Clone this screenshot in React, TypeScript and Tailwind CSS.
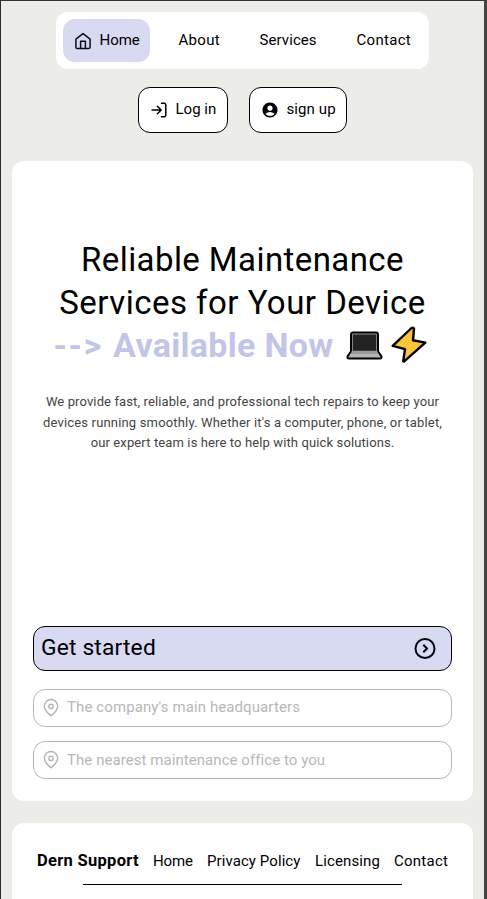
import React from "react";
import { MdAccountCircle } from "react-icons/md";

function HomeIcon() {
  return (
    <svg width="18" height="18" viewBox="0 0 18 18" fill="none" stroke="#0b0d1c" strokeWidth="1.5" strokeLinejoin="round">
      <path d="M1.9 7.2 9 1.6l7.1 5.6v8a1.4 1.4 0 0 1-1.4 1.4H3.3a1.4 1.4 0 0 1-1.4-1.4Z" />
      <path d="M6.6 16.4V9.3h4.8v7.1" />
    </svg>
  );
}

function LoginIcon() {
  return (
    <svg width="18" height="18" viewBox="0 0 18 18" fill="none" stroke="black" strokeWidth="1.5" strokeLinecap="round" strokeLinejoin="round">
      <path d="M2 9h9M7.4 5.2 11.2 9l-3.800 3.800" />
      <path d="M11.500 2.300h2.800a1.500 1.500 0 0 1 1.500 1.500v10.400a1.500 1.500 0 0 1-1.500 1.500h-2.800" />
    </svg>
  );
}

function PinIcon() {
  return (
    <svg className="shrink-0" width="18" height="20" viewBox="0 0 18 20" fill="none" stroke="#b3b3b3" strokeWidth="1.4" strokeLinejoin="round">
      <path d="M9 17.800c-1.500-1.600-6.700-4.800-6.700-9.600a6.700 6.700 0 0 1 13.400 0c0 4.800-5.200 8-6.700 9.600Z" />
      <circle cx="9" cy="8.400" r="2.100" />
    </svg>
  );
}

function ChevronCircle() {
  return (
    <svg width="22" height="22" viewBox="0 0 22 22" fill="none" stroke="#05060f" strokeWidth="2">
      <circle cx="11" cy="10.500" r="9.500" />
      <path d="m9.300 6.800 3.700 3.700-3.700 3.700" />
    </svg>
  );
}

function Laptop() {
  return (
    <svg width="37" height="29" viewBox="0 0 37 29" stroke="black" strokeWidth="2" strokeLinejoin="round">
      <path d="M5 21V3.500Q5 1.500 7 1.500h23q2 0 2 2V21Z" fill="#9b9b9b" />
      <path d="M6.800 3.500h23.400v16.500h-23.400Z" fill="#222" stroke="none" />
      <path d="M4.500 21h28l3 4.500q.5 2-1.500 2H3q-2 0-1.500-2Z" fill="#b5b5b5" />
      <path d="M6 19.800h25l1.500 3.200h-28Z" fill="#9b9b9b" stroke="none" />
    </svg>
  );
}

function Bolt() {
  return (
    <svg width="36" height="38" viewBox="0 0 36 38" fill="#fcc43a" stroke="black" strokeWidth="2.400" strokeLinejoin="round">
      <path d="M20.500 2 1.700 19.800l12.300 3.400-1.800 11.900q.3.800 1.300.1L34.300 16.600l-12.300-2.400L23 2.600Q22 1.200 20.500 2Z" />
    </svg>
  );
}

function Field({ label, spacing }: { label: string; spacing: string }) {
  return (
    <div className="flex h-[38px] items-center rounded-xl border border-[#b7b7b7] pl-[8px] text-[15px] text-[#b7b7b7]">
      <PinIcon />
      <span className={`ml-[7px] whitespace-nowrap ${spacing}`}>{label}</span>
    </div>
  );
}

export default function App() {
  return (
    <div className="h-[899px] overflow-hidden border-t border-r-[3px] border-l border-t-[#343133] border-r-[#444543] border-l-[#2d2a2c] bg-[#ecede8] font-[Roboto,sans-serif] text-black">
      <header className="flex flex-col items-center pt-[11px] pr-[1px]">
        <nav className="flex h-[57px] w-[373px] items-center rounded-xl bg-white pl-[7px] text-[15px] whitespace-nowrap">
          <a className="flex h-[43px] w-[87px] items-center rounded-xl bg-[#d7daf0] pl-[11px]">
            <HomeIcon />
            <span className="ml-[8px] tracking-[-0.05px]">Home</span>
          </a>
          <a className="ml-[29px] w-[81px] tracking-[0.3px]">About</a>
          <a className="w-[97px] tracking-[0.08px]">Services</a>
          <a className="tracking-[0.3px]">Contact</a>
        </nav>
        <div className="mt-[18px] flex gap-[21px] text-[15px] whitespace-nowrap">
          <button className="flex h-[46px] w-[90px] items-center rounded-xl border border-black bg-white pl-[11px]">
            <LoginIcon />
            <span className="ml-[8px] pb-px tracking-[0px]">Log in</span>
          </button>
          <button className="flex h-[46px] w-[98px] items-center rounded-xl border border-black bg-white pl-[11px]">
            <MdAccountCircle size={18} />
            <span className="ml-[8px] pb-px tracking-[0.1px]">sign up</span>
          </button>
        </div>
      </header>

      <main className="mt-[28px] ml-[11px] flex h-[640px] w-[461px] flex-col rounded-xl bg-white px-[21px]">
        <h1 className="mt-[77px] flex flex-col items-center text-[33px] leading-[43px] whitespace-nowrap">
          <span className="tracking-[0.42px]">Reliable Maintenance</span>
          <span className="tracking-[0.47px]">Services for Your Device</span>
          <span className="mr-[4px] flex items-center">
            <b className="text-[34px] font-bold text-[#c1c5e8]">
              <span className="tracking-[1.7px]">--&gt; </span>
              <span className="tracking-[0.3px]">Available Now</span>
            </b>
            <span className="ml-[13px]"><Laptop /></span>
            <span className="ml-[8px] pb-[2px]"><Bolt /></span>
          </span>
        </h1>
        <p className="mt-[25px] text-center text-[13px] leading-[20.5px] whitespace-nowrap text-[#444]">
          <span className="block tracking-[0.12px]">We provide fast, reliable, and professional tech repairs to keep your</span>
          <span className="block tracking-[0.17px]">devices running smoothly. Whether it's a computer, phone, or tablet,</span>
          <span className="block tracking-[0.12px]">our expert team is here to help with quick solutions.</span>
        </p>
        <div className="mt-auto mb-[22px] flex flex-col">
          <button className="flex h-[45px] items-center justify-between rounded-xl border border-black bg-[#d7daf0] pr-[15px] pl-[7px] text-[22.8px]">
            <span className="tracking-[0.17px]">Get started</span>
            <ChevronCircle />
          </button>
          <div className="mt-[18px] flex flex-col gap-[14px]">
            <Field label="The company's main headquarters" spacing="tracking-[0.1px] pb-px" />
            <Field label="The nearest maintenance office to you" spacing="tracking-[0.06px] pt-px" />
          </div>
        </div>
      </main>

      <footer className="mt-[22px] ml-[11px] flex h-[120px] w-[461px] flex-col rounded-t-xl bg-white">
        <div className="mt-[26px] flex h-[24px] items-center pl-[25px] text-[15px] whitespace-nowrap">
          <b className="w-[116px] pt-px text-[16.5px] font-bold tracking-[0.3px]">Dern Support</b>
          <a className="w-[54px] tracking-[-0.1px]">Home</a>
          <a className="w-[108px] tracking-[0.08px]">Privacy Policy</a>
          <a className="w-[79px] tracking-[0.13px]">Licensing</a>
          <a className="tracking-[0.25px]">Contact</a>
        </div>
        <div className="mt-[11px] ml-[71px] h-px w-[319px] bg-black" />
      </footer>
    </div>
  );
}
